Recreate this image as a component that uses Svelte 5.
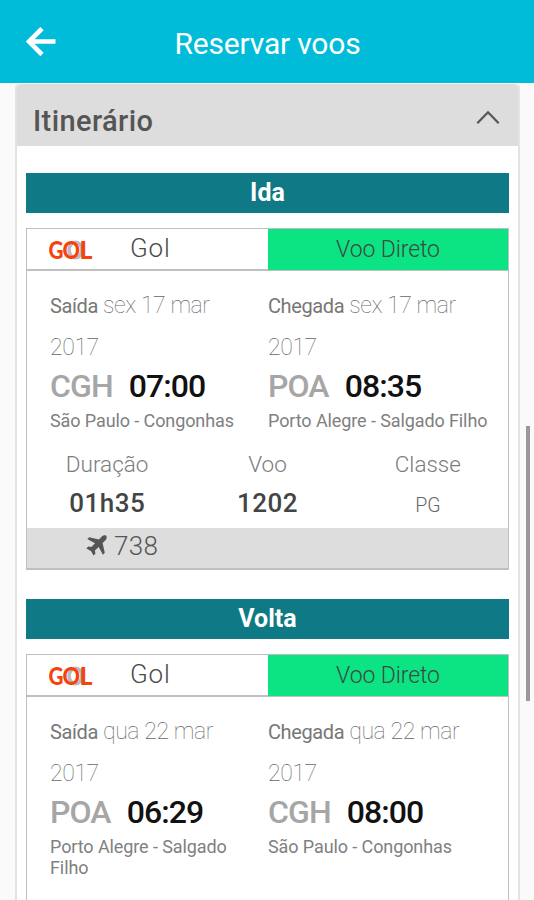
<script>
  const legs = [
    {
      title: 'Ida',
      airline: 'Gol',
      stops: 'Voo Direto',
      points: [
        { label: 'Saída', day: 'sex 17 mar', year: 2017, code: 'CGH', time: '07:00', place: 'São Paulo - Congonhas' },
        { label: 'Chegada', day: 'sex 17 mar', year: 2017, code: 'POA', time: '08:35', place: 'Porto Alegre - Salgado Filho' }
      ],
      duration: '01h35',
      flight: '1202',
      cabin: 'PG',
      aircraft: '738'
    },
    {
      title: 'Volta',
      airline: 'Gol',
      stops: 'Voo Direto',
      points: [
        { label: 'Saída', day: 'qua 22 mar', year: 2017, code: 'POA', time: '06:29', place: 'Porto Alegre - Salgado Filho' },
        { label: 'Chegada', day: 'qua 22 mar', year: 2017, code: 'CGH', time: '08:00', place: 'São Paulo - Congonhas' }
      ]
    }
  ]

  let open = $state(true)
</script>

<div class="screen">
  <header class="app-bar">
    <button class="back" aria-label="Voltar">
      <svg width="30" height="30" viewBox="0 0 30 30">
        <path d="M16 1.5 L3 14.5 L16 27.5 M3.5 14.5 H29.5" />
      </svg>
    </button>
    <h1>Reservar voos</h1>
  </header>

  <div class="panel">
    <button class="panel-head" onclick={() => (open = !open)}>
      <span>Itinerário</span>
      <svg class:closed={!open} width="24" height="15" viewBox="0 0 24 15">
        <path d="M1.3 13.3 L12 2.3 L22.7 13.3" />
      </svg>
    </button>

    {#if open}
      <div class="panel-body">
        {#each legs as leg}
          <h2>{leg.title}</h2>
          <div class="card">
            <div class="carrier">
              <div class="airline">
                <svg class="logo" width="44" height="34" viewBox="0 -6 44 34">
                  <ellipse cx="26.5" cy="11" rx="6.5" ry="7.8" />
                  <text x="-0.5" y="20" textLength="15" lengthAdjust="spacingAndGlyphs">G</text>
                  <text x="13.5" y="20" textLength="17.5" lengthAdjust="spacingAndGlyphs">O</text>
                  <text x="30.5" y="20" textLength="13" lengthAdjust="spacingAndGlyphs">L</text>
                </svg>
                <span>{leg.airline}</span>
              </div>
              <div class="stops">{leg.stops}</div>
            </div>

            <div class="points">
              {#each leg.points as point}
                <div class="point">
                  <div class="when">
                    <span class="label">{point.label}</span>
                    <span>{point.day}</span>
                  </div>
                  <div class="when">{point.year}</div>
                  <div class="hour"><span class="code">{point.code}</span><span class="time">{point.time}</span></div>
                  <div class="place">{point.place}</div>
                </div>
              {/each}
            </div>

            {#if leg.flight}
              <div class="details">
                <div><span>Duração</span><b>{leg.duration}</b></div>
                <div><span>Voo</span><b>{leg.flight}</b></div>
                <div><span>Classe</span><small>{leg.cabin}</small></div>
              </div>
              <div class="aircraft">
                <svg width="21" height="21" viewBox="0 0 21 21">
                  <path d="M20.2 0.8 C19 -0.3 16.8 0.5 15.6 1.7 L12.9 4.4 L3.2 2.2 L1.3 4.1 L9 8.3 L5.4 12.1 L2.2 11.6 L0.4 13.4 L4.9 16.1 L7.6 20.6 L9.4 18.8 L8.9 15.6 L12.7 12 L16.9 19.7 L18.8 17.8 L16.6 8.1 L19.3 5.4 C20.5 4.2 21.3 2 20.2 0.8 Z" />
                </svg>
                <span>{leg.aircraft}</span>
              </div>
            {/if}
          </div>
        {/each}
      </div>
    {/if}
  </div>

  <div class="scroll-thumb"></div>
</div>

<style>
  .screen {
    position: relative;
    height: 900px;
    overflow: hidden;
    background: #fafafa;
    color: #555;
    font-family: Roboto, sans-serif;
  }
  button {
    border: none;
    padding: 0;
    background: none;
    font-family: inherit;
  }
  .app-bar {
    display: grid;
    grid-template-columns: 84px 1fr 84px;
    align-items: center;
    height: 83px;
    background: #00bcd9;
    color: #fff;
  }
  .back {
    height: 30px;
    padding-left: 26px;
    text-align: left;
  }
  .back svg {
    display: block;
  }
  .back path {
    fill: none;
    stroke: #fff;
    stroke-width: 4.6;
  }
  h1 {
    margin: 0;
    padding: 4px 0 0 1px;
    font-size: 30px;
    font-weight: 400;
    line-height: 36px;
    letter-spacing: -0.2px;
    text-align: center;
  }
  .panel {
    margin: 1px 14px 0 15px;
    min-height: 830px;
    border: 2px solid #e3e3e3;
    border-top: none;
    border-radius: 4px 4px 0 0;
    background: #fff;
  }
  .panel-head {
    display: flex;
    justify-content: space-between;
    align-items: center;
    box-sizing: border-box;
    width: 100%;
    height: 62px;
    padding: 12px 18px 0 16px;
    border-radius: 4px 4px 0 0;
    background: #ddd;
    color: #555;
    font-size: 29px;
    font-weight: 500;
    letter-spacing: 0.4px;
  }
  .panel-head svg {
    margin-bottom: 7px;
  }
  .panel-head path {
    fill: none;
    stroke: #555;
    stroke-width: 2.2;
  }
  .closed {
    transform: rotate(180deg);
  }
  .panel-body {
    padding: 27px 9px 0;
  }
  h2 {
    height: 40px;
    margin: 0 0 15px;
    background: #0f7985;
    color: #fff;
    font-size: 25px;
    font-weight: 700;
    line-height: 39px;
    text-align: center;
  }
  .card {
    margin-bottom: 29px;
    border: 2px solid #bfbfbf;
    border-width: 1.5px 1.5px 2px 1.5px;
  }
  .card:last-child {
    min-height: 260px;
  }
  .carrier {
    display: grid;
    grid-template-columns: 241px 1fr;
    height: 40px;
    border-bottom: 2px solid #bfbfbf;
  }
  .airline {
    display: flex;
    align-items: center;
    padding-left: 22px;
    color: #4a4a4a;
    font-size: 26px;
    font-weight: 300;
    line-height: 36px;
    letter-spacing: 0.8px;
  }
  .airline span {
    margin: 0 0 3px 37px;
  }
  .logo {
    letter-spacing: 0;
  }
  .logo ellipse {
    fill: none;
    stroke: #b9bcc0;
    stroke-width: 3.6;
  }
  .logo text {
    fill: #f4430f;
    font-family: Lato, sans-serif;
    font-size: 25px;
    font-weight: 900;
  }
  .stops {
    background: #0ce382;
    color: #3c4a44;
    font-size: 23px;
    font-weight: 300;
    line-height: 41px;
    letter-spacing: -0.1px;
    text-align: center;
  }
  .points {
    display: grid;
    grid-template-columns: 218px 1fr;
    padding: 14px 0 13px 23px;
  }
  .when {
    color: #666;
    font-size: 23px;
    font-weight: 100;
    line-height: 41px;
    letter-spacing: -0.4px;
    white-space: nowrap;
  }
  .label {
    color: #777;
    font-size: 20px;
    font-weight: 400;
  }
  .hour {
    display: flex;
    gap: 16px;
    font-size: 32px;
    line-height: 37px;
    letter-spacing: -0.9px;
  }
  .code {
    color: #a6a6a6;
    font-weight: 500;
  }
  .time {
    color: #111;
    font-weight: 500;
  }
  .place {
    margin-top: 5px;
    padding-right: 14px;
    color: #808080;
    font-size: 18px;
    line-height: 21px;
    letter-spacing: -0.1px;
  }
  .details {
    display: grid;
    grid-template-columns: repeat(3, 1fr);
    height: 84px;
    text-align: center;
  }
  .details div {
    display: flex;
    flex-direction: column;
  }
  .details span {
    color: #7c7c7c;
    font-size: 22.5px;
    font-weight: 300;
    line-height: 41px;
  }
  .details b {
    color: #444;
    font-size: 26px;
    font-weight: 500;
    line-height: 37px;
    letter-spacing: 0.5px;
  }
  .details small {
    color: #666;
    font-size: 19.5px;
    font-weight: 300;
    line-height: 41px;
  }
  .aircraft {
    display: flex;
    align-items: center;
    gap: 7px;
    height: 40px;
    padding-left: 59px;
    background: #ddd;
    font-size: 26px;
    font-weight: 300;
    letter-spacing: 0.3px;
  }
  .aircraft svg {
    margin-bottom: 5px;
    fill: #555;
  }
  .aircraft span {
    padding-bottom: 4px;
  }
  .scroll-thumb {
    position: absolute;
    top: 426px;
    right: 4px;
    width: 4px;
    height: 275px;
    background: #999;
  }
</style>
